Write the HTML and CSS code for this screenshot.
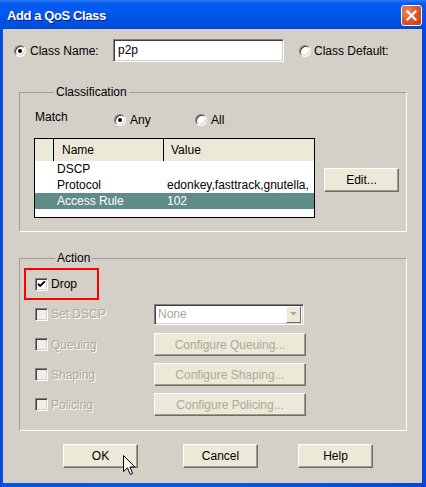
FILE: index.html
```html
<!DOCTYPE html>
<html>
<head>
<meta charset="utf-8">
<title>Add a QoS Class</title>
<link rel="stylesheet" href="styles.css">
</head>
<body>
<div class="window">
  <div class="titlebar">
    <span class="title">Add a QoS Class</span>
    <span class="close"><svg width="13" height="13" viewBox="0 0 13 13"><path d="M2.5 2.5 L10.5 10.5 M10.5 2.5 L2.5 10.5" stroke="#fff" stroke-width="2.2" stroke-linecap="square"/></svg></span>
  </div>
  <div class="client">
    <div class="name-row">
      <span class="radio checked"></span>
      <span class="name-lbl">Class Name:</span>
      <div class="textbox">p2p</div>
      <span class="radio default-radio"></span>
      <span class="default-lbl">Class Default:</span>
    </div>

    <div class="group classification">
      <div class="group-title">Classification</div>
      <div class="match-row">
        <span class="match-lbl">Match</span>
        <span class="radio-item any"><span class="radio checked"></span>Any</span>
        <span class="radio-item"><span class="radio"></span>All</span>
      </div>
      <div class="table-row">
        <div class="table">
          <div class="thead">
            <span class="h0"></span><span class="h1">Name</span><span class="h2">Value</span>
          </div>
          <div class="tr"><span class="c0"></span><span class="c1">DSCP</span><span class="c2"></span></div>
          <div class="tr"><span class="c0"></span><span class="c1">Protocol</span><span class="c2">edonkey,fasttrack,gnutella,</span></div>
          <div class="tr selected"><span class="c0"></span><span class="c1">Access Rule</span><span class="c2">102</span></div>
        </div>
        <div class="btn edit">Edit...</div>
      </div>
    </div>

    <div class="group action">
      <div class="group-title">Action</div>
      <div class="drop-box">
        <span class="check checked"><svg width="11" height="11" viewBox="0 0 11 11"><path d="M2 4.8 L4.2 7 L8.8 2.4" fill="none" stroke="#000" stroke-width="1.9"/></svg></span>
        <span class="check-lbl">Drop</span>
      </div>
      <div class="opts">
        <div class="opt first">
          <span class="opt-lbl"><span class="check disabled"></span><span class="check-lbl dis">Set DSCP</span></span>
          <div class="select"><span class="sel-text">None</span><span class="sel-btn"><svg width="7" height="4" viewBox="0 0 7 4"><path d="M0 0 H7 L3.5 3.5 Z" fill="#aca899"/></svg></span></div>
        </div>
        <div class="opt">
          <span class="opt-lbl"><span class="check disabled"></span><span class="check-lbl dis">Queuing</span></span>
          <div class="btn config">Configure Queuing...</div>
        </div>
        <div class="opt">
          <span class="opt-lbl"><span class="check disabled"></span><span class="check-lbl dis">Shaping</span></span>
          <div class="btn config">Configure Shaping...</div>
        </div>
        <div class="opt">
          <span class="opt-lbl"><span class="check disabled"></span><span class="check-lbl dis">Policing</span></span>
          <div class="btn config">Configure Policing...</div>
        </div>
      </div>
    </div>

    <div class="buttons">
      <div class="btn dlg">OK</div>
      <div class="btn dlg cancel">Cancel</div>
      <div class="btn dlg help">Help</div>
    </div>

    <svg class="cursor" width="13" height="21" viewBox="0 0 13 21"><path d="M0.5 0.5 V16.5 L4.5 12.8 L7.3 19.5 L9.6 18.5 L6.9 12 H11.8 Z" fill="#fff" stroke="#000" stroke-width="1" stroke-linejoin="miter"/></svg>
  </div>
</div>
</body>
</html>
```

FILE: styles.css
```css
* { box-sizing: border-box; }
html, body { margin: 0; padding: 0; }
body {
  width: 426px;
  height: 487px;
  overflow: hidden;
  background: #d4d0c8;
  font-family: "Liberation Sans", Arial, sans-serif;
  font-size: 12px;
  color: #000;
}

.window {
  width: 426px;
  height: 487px;
  display: flex;
  flex-direction: column;
  background: linear-gradient(to right, #0a3fd2 0, #0a52e4 2px, #0858e8 50%, #0648d8 100%);
}

.titlebar {
  flex: none;
  height: 29px;
  display: flex;
  align-items: center;
  justify-content: space-between;
  padding: 0 4px 0 7px;
  background: linear-gradient(to bottom,
    #2f7cf4 0px, #0a5ef0 3px, #0058ee 6px, #035bf0 10px,
    #0055e6 16px, #0052e2 22px, #0050de 26px, #0046d2 29px);
}
.title {
  color: #fff;
  font-weight: bold;
  font-size: 13px;
  letter-spacing: -0.4px;
  margin-top: 2px;
  text-shadow: 1px 1px #0a1e8a;
}
.close {
  width: 21px;
  height: 21px;
  margin-top: 1px;
  border: 1px solid #fff;
  border-radius: 3px;
  background: radial-gradient(circle at 30% 30%, #ec8a66 0, #de5a32 45%, #c8381a 100%);
  display: flex;
  align-items: center;
  justify-content: center;
}

.client {
  flex: 1;
  margin: 0 4px 4px 3px;
  background: #d4d0c8;
  position: relative;
  display: flex;
  flex-direction: column;
}

/* radio */
.radio {
  flex: none;
  width: 12px;
  height: 12px;
  border-radius: 50%;
  background: #fff;
  border: 1px solid;
  border-color: #808080 #fff #fff #808080;
  box-shadow: inset 1px 1px 0 #404040, inset -1px -1px 0 #d4d0c8;
  display: flex;
  align-items: center;
  justify-content: center;
}
.radio.checked::after {
  content: "";
  width: 4px;
  height: 4px;
  border-radius: 50%;
  background: #000;
}

/* name row */
.name-row {
  display: flex;
  align-items: center;
  height: 23px;
  margin-top: 10px;
  padding-left: 11px;
}
.name-lbl { width: 83px; margin-left: 4px; }
.textbox {
  width: 171px;
  height: 23px;
  background: #fff;
  border: 1px solid;
  border-color: #808080 #fff #fff #808080;
  box-shadow: inset 1px 1px 0 #404040, inset -1px -1px 0 #d4d0c8;
  padding-left: 4px;
  line-height: 21px;
}
.default-radio { margin-left: 15px; }
.default-lbl { margin-left: 3px; }

/* groups */
.group {
  margin: 0 15px 0 16px;
  border: 1px solid;
  border-color: #a09e96 #fff #fff #a09e96;
}
.group-title {
  width: fit-content;
  margin: -8px 0 0 20px;
  padding: 0 2px;
  line-height: 14px;
  background: #d4d0c8;
}
.classification {
  margin-top: 30px;
  padding: 0 0 13px 14px;
}
.match-row {
  display: flex;
  align-items: flex-start;
  margin-top: 11px;
}
.match-lbl {
  width: 79px;
  margin-left: 1px;
  line-height: 14px;
}
.radio-item {
  display: flex;
  align-items: center;
  height: 14px;
  margin-top: 3px;
}
.radio-item .radio { margin-right: 4px; }
.radio-item.any { width: 81px; }

.table-row {
  display: flex;
  align-items: flex-start;
  margin-top: 11px;
}
.table {
  width: 281px;
  height: 80px;
  border: 1px solid #000;
  background: #fff;
  overflow: hidden;
}
.thead {
  display: flex;
  height: 22px;
  background: #ece9d8;
  line-height: 22px;
}
.h0 { width: 19px; border-right: 1px solid #000; }
.h1 { width: 110px; border-right: 1px solid #000; padding-left: 8px; }
.h2 { flex: 1; padding-left: 7px; }
.tr {
  display: flex;
  height: 16px;
  line-height: 16px;
  white-space: nowrap;
}
.tr .c0 { width: 19px; flex: none; }
.tr .c1 { width: 110px; flex: none; padding-left: 3px; }
.tr .c2 { flex: 1; padding-left: 3px; overflow: hidden; }
.tr.selected { background: #5f8c89; color: #fff; }

/* buttons */
.btn {
  flex: none;
  display: flex;
  align-items: center;
  justify-content: center;
  background: #ece9d8;
  border: 1px solid;
  border-color: #fff #716f64 #716f64 #fff;
  box-shadow: inset -1px -1px 0 #9d9a8c;
}
.edit {
  width: 75px;
  height: 24px;
  margin: 30px 0 0 9px;
}

/* action */
.action {
  margin-top: 26px;
  padding: 0 0 14px 15px;
}
.drop-box {
  width: 75px;
  height: 32px;
  margin: 3px 0 0 -11px;
  border: 2px solid #f00;
  padding-left: 9px;
  display: flex;
  align-items: center;
}
.check {
  flex: none;
  width: 13px;
  height: 13px;
  background: #fff;
  border: 1px solid;
  border-color: #808080 #fff #fff #808080;
  box-shadow: inset 1px 1px 0 #404040, inset -1px -1px 0 #d4d0c8;
  display: flex;
  align-items: center;
  justify-content: center;
}
.check svg { display: block; }
.check.disabled { background: #efeee8; }
.check-lbl { margin-left: 3px; }
.check-lbl.dis { color: #aca899; text-shadow: 1px 1px 0 #fff; }

.opts {
  display: flex;
  flex-direction: column;
  gap: 7px;
  margin-top: 2px;
}
.opt {
  display: flex;
  align-items: center;
  height: 23px;
}
.opt.first { height: 24px; }
.opt-lbl {
  width: 119px;
  display: flex;
  align-items: center;
}
.select {
  width: 150px;
  height: 21px;
  display: flex;
  align-items: center;
  background: #fff;
  border: 1px solid;
  border-color: #808080 #fff #fff #808080;
  box-shadow: inset 1px 1px 0 #404040, inset -1px -1px 0 #d4d0c8;
  padding: 2px 2px 2px 3px;
}
.sel-text { flex: 1; color: #aca899; }
.sel-btn {
  width: 15px;
  height: 17px;
  display: flex;
  align-items: center;
  justify-content: center;
  background: #ece9d8;
  border: 1px solid;
  border-color: #fff #716f64 #716f64 #fff;
}
.config {
  width: 152px;
  height: 23px;
  color: #aca899;
}

.buttons {
  display: flex;
  margin-top: 13px;
  padding-left: 60px;
}
.dlg { width: 75px; height: 24px; }
.cancel { margin-left: 45px; }
.help { margin-left: 40px; }

.cursor {
  position: absolute;
  left: 120px;
  top: 426px;
}
```
